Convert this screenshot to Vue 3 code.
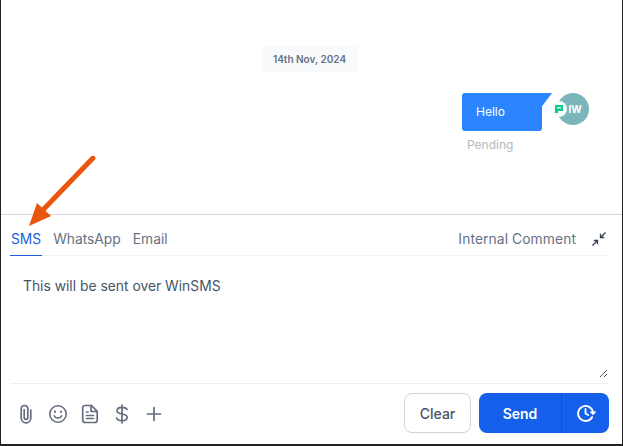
<script setup>
const tabs = ['SMS', 'WhatsApp', 'Email']
</script>

<template>
  <div class="frame">
    <section class="thread">
      <div class="date-row"><span class="date">14th Nov, 2024</span></div>
      <div class="msg-row">
        <div class="msg">
          <div class="bubble"><span class="bubble-body">Hello</span></div>
          <div class="status">Pending</div>
        </div>
        <div class="avatar">
          IW
          <span class="badge">
            <svg width="10" height="10" viewBox="0 0 10 10"><path d="M1 1h8v6H4v2H1z" fill="#10c98a"/><path d="M3 3.200h4v1.200H3z" fill="#fff"/></svg>
          </span>
        </div>
      </div>
    </section>

    <section class="composer">
      <div class="tabs">
        <span v-for="(t, i) in tabs" :key="t" class="tab" :class="{ active: i === 0 }">{{ t }}</span>
        <span class="spacer"></span>
        <span class="internal">Internal Comment</span>
        <svg class="collapse" width="16" height="16" viewBox="0 0 16 16" fill="none" stroke="#344054" stroke-width="1.300">
          <path d="M14.500 1.500 9.800 6.200M9.500 2.800v3.700h3.700M1.500 14.500l4.700-4.700M6.500 13.200V9.500H2.800"/>
        </svg>
      </div>
      <div class="editor">
        This will be sent over WinSMS
        <svg class="grip" width="9" height="9" viewBox="0 0 9 9" stroke="#555" stroke-width="1" fill="none"><path d="M1 8 8 1M5 8l3-3"/></svg>
      </div>
      <div class="actions">
        <div class="tools">
          <svg width="20" height="20" viewBox="0 0 20 20" fill="none" stroke="#646c7e" stroke-width="1.700" stroke-linecap="round"><path d="M8.200 5.500V13.500a1.800 1.800 0 0 0 3.600 0V4.800a3.300 3.300 0 0 0-6.600 0V14a4.800 4.800 0 0 0 9.600 0V6"/></svg>
          <svg width="20" height="20" viewBox="0 0 20 20" fill="none" stroke="#646c7e" stroke-width="1.600" stroke-linecap="round"><circle cx="10" cy="10" r="8.200"/><path d="M6.300 11.800c1 1.600 2.300 2.300 3.700 2.300s2.700-.7 3.700-2.300"/><path d="M7 7.500v.6M13 7.500v.6" stroke-width="2"/></svg>
          <svg width="20" height="20" viewBox="0 0 20 20" fill="none" stroke="#646c7e" stroke-width="1.700" stroke-linecap="round" stroke-linejoin="round"><path d="M5 1.500h6.500L17.200 7.300V16.200a2.300 2.300 0 0 1-2.300 2.300H5a2.300 2.300 0 0 1-2.300-2.300V3.800A2.300 2.300 0 0 1 5 1.500z"/><path d="M11 1.500V7.500h6.200M6.500 8h1.500M6.500 11.500h7M6.500 14.500h7"/></svg>
          <svg width="20" height="20" viewBox="0 0 20 20" fill="none" stroke="#646c7e" stroke-width="1.700" stroke-linecap="round"><path d="M10 1v18M15 5.500C14.500 4 12.700 3.300 10 3.300 7 3.300 5 4.700 5 6.700c0 4.600 10.200 2 10.200 6.600 0 2-2.200 3.400-5.200 3.400-3 0-4.900-1.100-5.400-2.700"/></svg>
          <svg width="20" height="20" viewBox="0 0 20 20" fill="none" stroke="#646c7e" stroke-width="1.700" stroke-linecap="round"><path d="M10 3.500v13M3.500 10h13"/></svg>
        </div>
        <div class="buttons">
          <button class="clear">Clear</button>
          <div class="send-group">
            <button class="send">Send</button>
            <button class="schedule">
              <svg width="20" height="20" viewBox="0 0 20 20" fill="none" stroke="#fff" stroke-width="1.800" stroke-linecap="round" stroke-linejoin="round"><path d="M17 9.500A7.500 7.500 0 1 0 16.200 14"/><path d="M9.500 6v4.500l2.800 1.500"/><path d="M14.600 9.200 17 11.800 19.400 9.200z" fill="#fff" stroke-width="1"/></svg>
            </button>
          </div>
        </div>
      </div>
    </section>

    <svg class="arrow" width="70" height="72" viewBox="0 0 70 72">
      <path d="M65 2 12 57" stroke="#ea5510" stroke-width="5" stroke-linecap="round" fill="none"/>
      <path d="M1 70 9 47 23 60z" fill="#ea5510"/>
    </svg>
  </div>
</template>

<style>
html, body { margin: 0; background: #fff; }
</style>

<style scoped>
.frame {
  position: relative;
  box-sizing: border-box;
  width: 623px;
  height: 446px;
  background: #fff;
  border-left: 1px solid #222;
  border-right: 1px solid #222;
  border-bottom: 2px solid #222;
  font-family: Inter, "Liberation Sans", sans-serif;
  display: flex;
  flex-direction: column;
  overflow: hidden;
}
.thread {
  height: 215px;
  box-sizing: border-box;
  padding-top: 46px;
  flex: none;
  border-bottom: 1px solid #d6d8dc;
}
.date-row { display: flex; justify-content: center; padding-right: 4px; }
.date {
  width: 96px;
  height: 26px;
  background: #f9fafb;
  border-radius: 4px;
  color: #667085;
  font-size: 10px;
  font-weight: 600;
  line-height: 26px;
  text-align: center;
}
.msg-row {
  display: flex;
  justify-content: flex-end;
  margin-top: 21px;
  padding-right: 33px;
}
.msg { width: 90px; }
.bubble {
  position: relative;
  height: 38px;
  width: 80px;
}
.bubble::after {
  content: "";
  position: absolute;
  left: 78px;
  top: 0;
  width: 12px;
  height: 16px;
  background: #2a85ff;
  clip-path: polygon(0 0, 100% 0, 0 100%);
}
.bubble-body {
  display: block;
  box-sizing: border-box;
  height: 38px;
  padding-left: 14px;
  background: #2a85ff;
  color: #fff;
  font-size: 12px;
  line-height: 38px;
  border-radius: 3px;
}
.status {
  margin-top: 6px;
  padding-left: 5px;
  color: #b4b8c0;
  font-size: 12px;
  line-height: 15px;
}
.avatar {
  position: relative;
  margin-left: 5px;
  width: 32px;
  height: 32px;
  border-radius: 50%;
  background: #7ab6ba;
  color: #fff;
  font-size: 10px;
  font-weight: 700;
  line-height: 32px;
  text-align: center;
  padding-left: 4px;
  box-sizing: border-box;
}
.badge {
  position: absolute;
  left: -6px;
  top: 8px;
  width: 16px;
  height: 16px;
  border-radius: 50%;
  background: #f2fbf8;
  display: flex;
  align-items: center;
  justify-content: center;
}
.composer {
  flex: 1;
  min-height: 0;
  display: flex;
  flex-direction: column;
  padding: 0 13px 0 9px;
}
.tabs {
  height: 41px;
  box-sizing: border-box;
  flex: none;
  display: flex;
  align-items: stretch;
  border-bottom: 1px solid #f0f1f3;
  color: #667085;
  font-size: 13.800px;
  line-height: 48px;
}
.tab { margin-right: 10px; padding: 0 1px; height: 41px; box-sizing: border-box; }
.tab.active { color: #1b5fdf; border-bottom: 1px solid #1b5fdf; }
.spacer { flex: 1; }
.internal { margin-right: 15px; letter-spacing: 0.1px; }
.collapse { margin-top: 16px; margin-right: 2px; }
.editor {
  position: relative;
  flex: none;
  height: 128px;
  box-sizing: border-box;
  padding: 21px 13px 0;
  border-bottom: 1px solid #eceef0;
  color: #475467;
  font-size: 13.850px;
  line-height: 18px;
}
.grip { position: absolute; right: 1px; bottom: 5px; }
.actions {
  flex: 1;
  display: flex;
  align-items: center;
  justify-content: space-between;
  padding-bottom: 2px;
}
.tools { display: flex; gap: 12px; padding-left: 6px; margin-top: 1px; }
.buttons { display: flex; gap: 8px; }
button { font-family: inherit; cursor: pointer; }
.clear {
  width: 67px;
  height: 40px;
  background: #fff;
  border: 1px solid #d0d5dd;
  border-radius: 8px;
  color: #475467;
  font-size: 14px;
  font-weight: 500;
}
.send-group {
  display: flex;
  width: 130px;
  height: 40px;
  background: #1560ea;
  border-radius: 8px;
  overflow: hidden;
}
.send, .schedule {
  border: 0;
  background: transparent;
  color: #fff;
  font-size: 14px;
  font-weight: 600;
  padding: 0;
}
.send { width: 83px; border-right: 1px solid #0f4fc8; }
.schedule { flex: 1; display: flex; align-items: center; justify-content: center; }
.arrow { position: absolute; left: 27px; top: 156px; }
</style>
